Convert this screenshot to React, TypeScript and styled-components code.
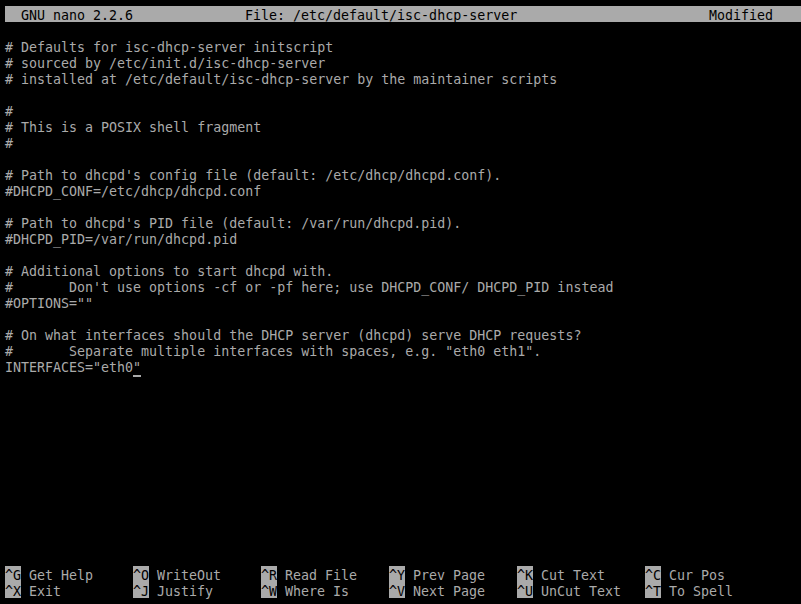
import React from "react";
import styled, { createGlobalStyle } from "styled-components";

const GlobalStyle = createGlobalStyle`
  html, body {
    margin: 0;
    padding: 0;
    background: #000;
    overflow: hidden;
  }
`;

const Screen = styled.div`
  width: 801px;
  height: 604px;
  background: #000;
  color: #aaaaaa;
  font-family: "DejaVu Sans Mono", "Liberation Mono", monospace;
  font-size: 13.3px;
  overflow: hidden;
  padding: 6px 0 0 5px;
  box-sizing: border-box;
`;

const Terminal = styled.div`
  width: 800px;
  height: 592px;
  display: flex;
  flex-direction: column;
`;

const Row = styled.div`
  height: 16px;
  box-sizing: border-box;
  padding-top: 2px;
  line-height: 15px;
  white-space: pre;
`;

const TitleBar = styled(Row)`
  background: #aaaaaa;
  color: #000;
  display: grid;
  grid-template-columns: 240px 1fr 80px 16px;
`;

const Editor = styled.div`
  margin-top: 16px;
  display: flex;
  flex-direction: column;
  flex: 1;
`;

const Cursor = styled.span`
  position: relative;
  &::after {
    content: "";
    position: absolute;
    left: 0;
    right: 0;
    bottom: -2px;
    height: 2px;
    background: #aaaaaa;
  }
`;

const Shortcuts = styled.div`
  display: grid;
  grid-template-columns: repeat(6, 128px);
  grid-auto-rows: 16px;
`;

const Shortcut = styled(Row)`
  display: flex;
`;

const Key = styled.span`
  background: #aaaaaa;
  color: #000;
  width: 16px;
  height: 16px;
  margin-top: -2px;
  padding-top: 2px;
  box-sizing: border-box;
  margin-right: 8px;
`;

const lines: string[] = [
  "# Defaults for isc-dhcp-server initscript",
  "# sourced by /etc/init.d/isc-dhcp-server",
  "# installed at /etc/default/isc-dhcp-server by the maintainer scripts",
  "",
  "#",
  "# This is a POSIX shell fragment",
  "#",
  "",
  "# Path to dhcpd's config file (default: /etc/dhcp/dhcpd.conf).",
  "#DHCPD_CONF=/etc/dhcp/dhcpd.conf",
  "",
  "# Path to dhcpd's PID file (default: /var/run/dhcpd.pid).",
  "#DHCPD_PID=/var/run/dhcpd.pid",
  "",
  "# Additional options to start dhcpd with.",
  "#       Don't use options -cf or -pf here; use DHCPD_CONF/ DHCPD_PID instead",
  '#OPTIONS=""',
  "",
  "# On what interfaces should the DHCP server (dhcpd) serve DHCP requests?",
  '#       Separate multiple interfaces with spaces, e.g. "eth0 eth1".',
];

const shortcuts: [string, string][] = [
  ["^G", "Get Help"],
  ["^O", "WriteOut"],
  ["^R", "Read File"],
  ["^Y", "Prev Page"],
  ["^K", "Cut Text"],
  ["^C", "Cur Pos"],
  ["^X", "Exit"],
  ["^J", "Justify"],
  ["^W", "Where Is"],
  ["^V", "Next Page"],
  ["^U", "UnCut Text"],
  ["^T", "To Spell"],
];

export default function App() {
  return (
    <>
      <GlobalStyle />
      <Screen>
        <Terminal>
          <TitleBar>
            <span>{"  GNU nano 2.2.6"}</span>
            <span>File: /etc/default/isc-dhcp-server</span>
            <span>Modified</span>
            <span />
          </TitleBar>
          <Editor>
            {lines.map((l, i) => (
              <Row key={i}>{l}</Row>
            ))}
            <Row>
              {'INTERFACES="eth0'}
              <Cursor>"</Cursor>
            </Row>
          </Editor>
          <Row />
          <Shortcuts>
            {shortcuts.map(([k, label]) => (
              <Shortcut key={k}>
                <Key>{k}</Key>
                {label}
              </Shortcut>
            ))}
          </Shortcuts>
        </Terminal>
      </Screen>
    </>
  );
}
